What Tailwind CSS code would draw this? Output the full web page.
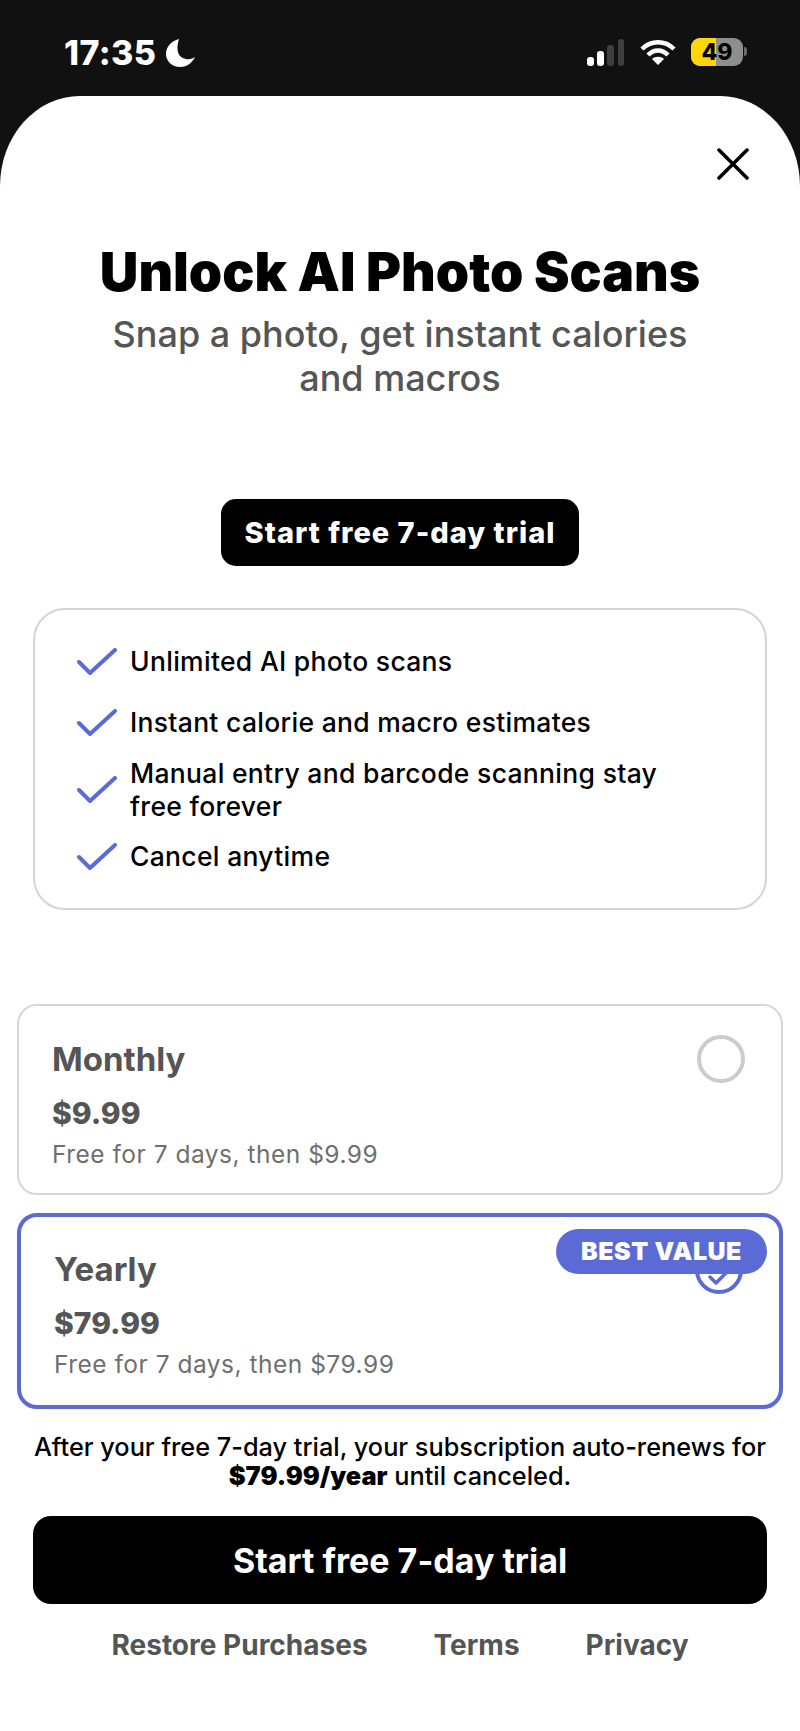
<!DOCTYPE html>
<html lang="en">
<head>
    <meta charset="UTF-8">
    <meta name="viewport" content="width=device-width, initial-scale=1.0">
    <title>Unlock AI Photo Scans</title>
    <script src="https://cdn.jsdelivr.net/npm/@tailwindcss/browser@4"></script>
</head>
<body class="bg-[#111111] font-['Inter',sans-serif]">
    <div class="w-[800px] h-[1731px] flex flex-col overflow-hidden">

        <!-- status bar -->
        <div class="h-[96px] shrink-0 flex justify-between pl-[64px] pr-[53px] pt-[36px] text-white">
            <div class="flex items-start gap-[10px]">
                <span class="text-[34px] leading-[34px] font-extrabold tracking-[0.4px]">17:35</span>
                <svg class="mt-[3px]" width="29" height="28" viewBox="0 0 29 28" fill="#fff"><path d="M13 0C5 2 0 8 0 15c0 7 6 13 14 13 7 0 12-4 15-10-3 2-6 2.500-9 2C13 19 9 12 13 0z"/></svg>
            </div>
            <div class="flex items-start">
                <svg class="mt-[3px]" width="40" height="27" viewBox="0 0 40 27">
                    <rect x="1" y="18" width="7" height="9" rx="3" fill="#fff"/>
                    <rect x="11" y="12" width="7" height="15" rx="3" fill="#fff"/>
                    <rect x="21" y="6" width="7" height="21" rx="3" fill="#3f3f3f"/>
                    <rect x="32" y="0" width="6" height="27" rx="3" fill="#3f3f3f"/>
                </svg>
                <svg class="ml-[14px] mt-[3px]" width="36" height="27" viewBox="0 0 36 27" fill="none" stroke="#fff" stroke-width="4.500">
                    <path d="M2 10C11 1 25 1 34 10"/>
                    <path d="M8 16C14 10 22 10 28 16"/>
                    <path d="M18 26l-6-6c3-3 9-3 12 0z" fill="#fff" stroke="none"/>
                </svg>
                <div class="relative ml-[15px] mt-[2px] w-[52px] h-[28px] rounded-[9px] overflow-hidden flex bg-[#8e8e8e]">
                    <div class="w-[25px] bg-[#ffd60a]"></div>
                    <span class="absolute inset-0 text-center text-black text-[23px] leading-[28px] font-extrabold">49</span>
                </div>
                <div class="mt-[11px] ml-[1px] w-[3px] h-[9px] rounded-r-full bg-[#6b6b6b]"></div>
            </div>
        </div>

        <!-- sheet -->
        <div class="flex-1 bg-white rounded-tl-[80px_90px] rounded-tr-[80px_90px] px-[17px] flex flex-col">
            <div class="flex justify-end pt-[52px] pr-[34px]">
                <svg width="32" height="32" viewBox="0 0 32 32" fill="none" stroke="#000" stroke-width="3.500" stroke-linecap="round"><path d="M2 2l28 28M30 2L2 30"/></svg>
            </div>

            <h1 class="mt-[62px] text-center text-[53.4px] leading-[60px] font-black text-black">Unlock AI Photo Scans</h1>
            <p class="mt-[10px] px-[80px] text-center text-[36px] leading-[44px] font-medium text-[#555555]">Snap a photo, get instant calories and macros</p>

            <button class="mt-[99px] self-center w-[358px] h-[67px] rounded-[15px] bg-black text-white text-[29px] tracking-[1px] font-extrabold">Start free 7-day trial</button>

            <div class="mt-[42px] mx-[16px] h-[302px] rounded-[32px] border-2 border-[#d4d4d4] pl-[42px] pr-[60px] flex flex-col pt-[25px] text-[26.5px] tracking-[0.3px] leading-[33px] font-medium text-black">
                <div class="h-[52px] flex items-center gap-[13px]">
                    <svg class="shrink-0 mt-[2px]" width="40" height="28" viewBox="0 0 40 28" fill="none" stroke="#5a6bd5" stroke-width="4" stroke-linecap="round" stroke-linejoin="round"><path d="M2 14l11 11L38 2"/></svg>
                    <span>Unlimited AI photo scans</span>
                </div>
                <div class="mt-[9px] h-[52px] flex items-center gap-[13px]">
                    <svg class="shrink-0 mt-[2px]" width="40" height="28" viewBox="0 0 40 28" fill="none" stroke="#5a6bd5" stroke-width="4" stroke-linecap="round" stroke-linejoin="round"><path d="M2 14l11 11L38 2"/></svg>
                    <span>Instant calorie and macro estimates</span>
                </div>
                <div class="mt-[4px] h-[76px] flex items-center gap-[13px]">
                    <svg class="shrink-0" width="40" height="28" viewBox="0 0 40 28" fill="none" stroke="#5a6bd5" stroke-width="4" stroke-linecap="round" stroke-linejoin="round"><path d="M2 14l11 11L38 2"/></svg>
                    <span>Manual entry and barcode scanning stay free forever</span>
                </div>
                <div class="mt-[2px] h-[52px] flex items-center gap-[13px]">
                    <svg class="shrink-0 mt-[2px]" width="40" height="28" viewBox="0 0 40 28" fill="none" stroke="#5a6bd5" stroke-width="4" stroke-linecap="round" stroke-linejoin="round"><path d="M2 14l11 11L38 2"/></svg>
                    <span>Cancel anytime</span>
                </div>
            </div>

            <!-- plans -->
            <div class="mt-[94px] h-[191px] rounded-[20px] border-2 border-[#d6d6d6] pl-[33px] pr-[36px] pt-[33px] flex justify-between items-start">
                <div>
                    <div class="text-[33px] leading-[40px] font-bold text-[#555555]">Monthly</div>
                    <div class="mt-[17px] text-[30px] leading-[34px] font-extrabold text-[#555555]">$9.99</div>
                    <div class="mt-[8px] text-[24.5px] tracking-[0.5px] leading-[32px] text-[#6f6f6f]">Free for 7 days, then $9.99</div>
                </div>
                <div class="mt-[-4px] w-[48px] h-[48px] rounded-full border-[4px] border-[#cccccc]"></div>
            </div>

            <div class="relative mt-[18px] h-[196px] rounded-[20px] border-[4px] border-[#5a6bd5] pl-[33px] pr-[36px] pt-[32px] flex justify-between items-start">
                <div>
                    <div class="text-[33px] leading-[40px] font-bold text-[#555555]">Yearly</div>
                    <div class="mt-[17px] text-[30px] leading-[34px] font-extrabold text-[#555555]">$79.99</div>
                    <div class="mt-[8px] text-[24.5px] tracking-[0.5px] leading-[32px] text-[#6f6f6f]">Free for 7 days, then $79.99</div>
                </div>
                <div class="mt-[-3px] w-[48px] h-[48px] rounded-full border-[4px] border-[#5a6bd5] flex items-center justify-center">
                    <svg class="mt-[14px]" width="24" height="18" viewBox="0 0 24 18" fill="none" stroke="#5a6bd5" stroke-width="3.500" stroke-linecap="round" stroke-linejoin="round"><path d="M3 9l6 6L21 3"/></svg>
                </div>
                <div class="absolute top-[12px] right-[12px] w-[211px] h-[45px] rounded-full bg-[#5a6bd5] text-white text-center text-[25px] leading-[45px] font-black tracking-[0.5px]">BEST VALUE</div>
            </div>

            <p class="mt-[23px] text-center text-[25.3px] leading-[29px] font-medium text-black">After your free 7-day trial, your subscription auto-renews for<br><strong class="font-black">$79.99/year</strong> until canceled.</p>

            <button class="mt-[26px] mx-[16px] h-[88px] rounded-[18px] bg-black text-white text-[34px] font-bold">Start free 7-day trial</button>

            <div class="mt-[24px] flex justify-center gap-[66px] text-[28px] leading-[34px] font-bold text-[#555555]">
                <span>Restore Purchases</span>
                <span>Terms</span>
                <span>Privacy</span>
            </div>
        </div>
    </div>
</body>
</html>
